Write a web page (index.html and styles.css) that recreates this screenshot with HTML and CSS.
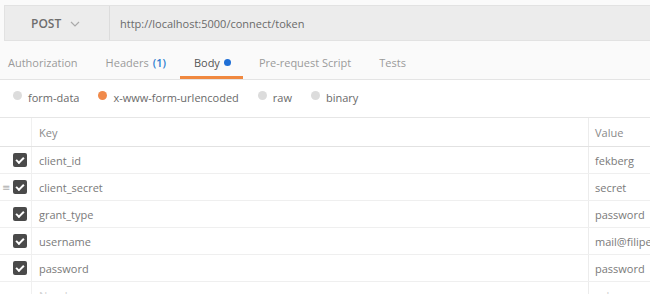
FILE: index.html
```html
<!DOCTYPE html>
<html lang="en">
  <head>
    <meta charset="UTF-8" />
    <title>Request Builder</title>
    <link rel="stylesheet" href="styles.css">
  </head>
  <body>
    <div class="url-bar">
      <div class="method">
        <span>POST</span>
        <svg class="chevron" width="10" height="6" viewBox="0 0 10 6">
          <path d="M1 1 L5 5 L9 1" fill="none" stroke="#aaa" stroke-width="1.2" />
        </svg>
      </div>
      <div class="url">http://localhost:5000/connect/token</div>
    </div>

    <div class="tabs">
      <div class="tab">Authorization</div>
      <div class="tab">Headers <span class="count">(1)</span></div>
      <div class="tab active">Body <span class="dot"></span></div>
      <div class="tab">Pre-request Script</div>
      <div class="tab">Tests</div>
    </div>

    <div class="body-types">
      <label class="radio"><span class="circle"></span>form-data</label>
      <label class="radio selected"><span class="circle"></span>x-www-form-urlencoded</label>
      <label class="radio"><span class="circle"></span>raw</label>
      <label class="radio"><span class="circle"></span>binary</label>
    </div>

    <div class="params">
      <div class="row head">
        <div class="cell check"></div>
        <div class="cell key">Key</div>
        <div class="cell value">Value</div>
      </div>
      <div class="row">
        <div class="cell check"><span class="box"></span></div>
        <div class="cell key">client_id</div>
        <div class="cell value">fekberg</div>
      </div>
      <div class="row">
        <div class="cell check"><span class="handle">&#8801;</span><span class="box"></span></div>
        <div class="cell key">client_secret</div>
        <div class="cell value">secret</div>
      </div>
      <div class="row">
        <div class="cell check"><span class="box"></span></div>
        <div class="cell key">grant_type</div>
        <div class="cell value">password</div>
      </div>
      <div class="row">
        <div class="cell check"><span class="box"></span></div>
        <div class="cell key">username</div>
        <div class="cell value">mail@filipekberg.se</div>
      </div>
      <div class="row">
        <div class="cell check"><span class="box"></span></div>
        <div class="cell key">password</div>
        <div class="cell value">password</div>
      </div>
      <div class="row empty">
        <div class="cell check"></div>
        <div class="cell key">New key</div>
        <div class="cell value">value</div>
      </div>
    </div>
  </body>
</html>
```

FILE: styles.css
```css
* {
  margin: 0;
  padding: 0;
  box-sizing: border-box;
  font-family: "Open Sans", "DejaVu Sans", sans-serif;
}

body {
  background-color: #fafafa;
  color: #808080;
  font-size: 11px;
  width: 650px;
  height: 294px;
  overflow: hidden;
}

.url-bar {
  margin: 5px 0 0 4px;
  height: 36px;
  display: flex;
  background-color: #ececec;
  border: 1px solid #e2e2e2;
  border-right: none;
}

.method {
  width: 105px;
  display: flex;
  align-items: center;
  padding-left: 26px;
  gap: 9px;
  border-right: 1px solid #dcdcdc;
  color: #6e6e6e;
  font-size: 12px;
  font-weight: 600;
}

.chevron {
  margin-top: 1px;
}

.url {
  display: flex;
  align-items: center;
  padding-left: 10px;
  color: #6a6a6a;
}

.tabs {
  height: 39px;
  display: flex;
  align-items: center;
  gap: 28px;
  padding-left: 8px;
  border-bottom: 1px solid #e4e4e4;
  color: #9a9a9a;
}

.tab {
  position: relative;
  height: 100%;
  display: flex;
  align-items: center;
  gap: 4px;
  padding-top: 5px;
}

.tab.active {
  color: #555;
}

.tab.active::after {
  content: "";
  position: absolute;
  left: -14px;
  right: -12px;
  bottom: 0;
  height: 3px;
  background-color: #f0883f;
}

.count {
  color: #2f7fd0;
  font-weight: 600;
}

.dot {
  width: 7px;
  height: 7px;
  border-radius: 50%;
  background-color: #1f6fd6;
}

.body-types {
  height: 38px;
  display: flex;
  align-items: center;
  gap: 19px;
  padding-left: 13px;
  padding-bottom: 3px;
  background-color: #fff;
  border-bottom: 1px solid #e6e6e6;
  color: #6a6a6a;
}

.radio {
  display: flex;
  align-items: center;
  gap: 6px;
}

.circle {
  width: 9px;
  height: 9px;
  border-radius: 50%;
  background-color: #dcdcdc;
  margin-top: -3px;
}

.radio.selected .circle {
  background-color: #f08a4b;
}

.params {
  background-color: #fff;
}

.row {
  display: flex;
  height: 27px;
  border-bottom: 1px solid #efefef;
  color: #7a7a7a;
}

.row.head {
  height: 29px;
  border-bottom: 1px solid #e2e2e2;
  color: #8a8a8a;
}

.cell {
  display: flex;
  align-items: center;
}

.cell.check {
  width: 32px;
  position: relative;
  justify-content: flex-end;
  padding-right: 4px;
  border-right: 1px solid #f0f0f0;
}

.cell.key {
  flex: 1;
  padding-left: 7px;
  border-right: 1px solid #ececec;
}

.cell.value {
  width: 61px;
  padding-left: 6px;
  white-space: nowrap;
  overflow: hidden;
}

.box {
  width: 14px;
  height: 14px;
  border-radius: 2px;
  background-color: #4a4a4a;
  display: flex;
  align-items: center;
  justify-content: center;
}

.box::after {
  content: "";
  width: 6px;
  height: 3px;
  border-left: 2px solid #fff;
  border-bottom: 2px solid #fff;
  transform: rotate(-45deg);
  margin-top: -2px;
}

.handle {
  position: absolute;
  left: 2px;
  color: #b0b0b0;
  font-size: 10px;
}

.row.empty {
  color: #d0d0d0;
}
```
